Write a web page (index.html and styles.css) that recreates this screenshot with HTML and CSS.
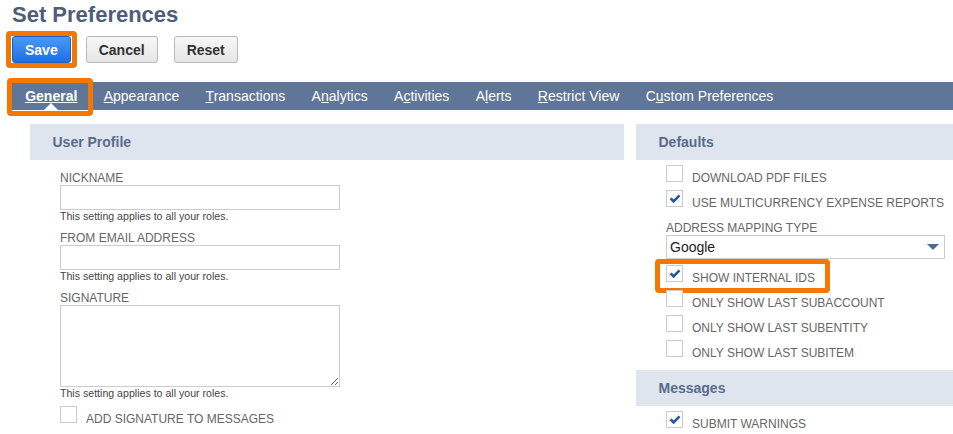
FILE: index.html
```html
<!DOCTYPE html>
<html lang="en">
<head>
    <meta charset="UTF-8">
    <title>Set Preferences</title>
    <link rel="stylesheet" href="styles.css">
</head>
<body>
    <header class="page-head">
        <h1 class="page-title">Set Preferences</h1>
        <div class="actions">
            <button class="btn btn-primary marked">Save</button>
            <button class="btn">Cancel</button>
            <button class="btn">Reset</button>
        </div>
    </header>

    <nav class="tabs">
        <a class="tab active marked"><u>G</u>eneral</a>
        <a class="tab"><u>A</u>ppearance</a>
        <a class="tab"><u>T</u>ransactions</a>
        <a class="tab">A<u>n</u>alytics</a>
        <a class="tab">A<u>c</u>tivities</a>
        <a class="tab">A<u>l</u>erts</a>
        <a class="tab"><u>R</u>estrict View</a>
        <a class="tab">C<u>u</u>stom Preferences</a>
    </nav>

    <main class="panels">
        <section class="panel">
            <h2 class="panel-head">User Profile</h2>
            <div class="panel-body fields">
                <div class="field">
                    <label class="field-label">NICKNAME</label>
                    <input class="text-input" type="text">
                    <div class="help">This setting applies to all your roles.</div>
                </div>
                <div class="field">
                    <label class="field-label">FROM EMAIL ADDRESS</label>
                    <input class="text-input" type="text">
                    <div class="help">This setting applies to all your roles.</div>
                </div>
                <div class="field field-last">
                    <label class="field-label">SIGNATURE</label>
                    <textarea class="text-area"></textarea>
                    <div class="help">This setting applies to all your roles.</div>
                </div>
                <div class="check-row">
                    <span class="box"></span>
                    <span class="check-label">ADD SIGNATURE TO MESSAGES</span>
                </div>
            </div>
        </section>

        <div class="side">
            <section class="panel">
                <h2 class="panel-head">Defaults</h2>
                <div class="panel-body checks">
                    <div class="check-row">
                        <span class="box"></span>
                        <span class="check-label">DOWNLOAD PDF FILES</span>
                    </div>
                    <div class="check-row">
                        <span class="box"><svg viewBox="0 0 15 15"><path d="M2.6 8.2 L4.6 6.4 L6.6 8.6 L11.6 3.4 L13.4 5.2 L6.6 12.2 Z"/></svg></span>
                        <span class="check-label">USE MULTICURRENCY EXPENSE REPORTS</span>
                    </div>
                    <label class="field-label select-label">ADDRESS MAPPING TYPE</label>
                    <div class="select">
                        <span>Google</span>
                        <svg class="caret" viewBox="0 0 12 6"><path d="M0 0 H12 L6 6 Z"/></svg>
                    </div>
                    <div class="check-row marked first-after-select">
                        <span class="box"><svg viewBox="0 0 15 15"><path d="M2.6 8.2 L4.6 6.4 L6.6 8.6 L11.6 3.4 L13.4 5.2 L6.6 12.2 Z"/></svg></span>
                        <span class="check-label">SHOW INTERNAL IDS</span>
                    </div>
                    <div class="check-row">
                        <span class="box"></span>
                        <span class="check-label">ONLY SHOW LAST SUBACCOUNT</span>
                    </div>
                    <div class="check-row">
                        <span class="box"></span>
                        <span class="check-label">ONLY SHOW LAST SUBENTITY</span>
                    </div>
                    <div class="check-row">
                        <span class="box"></span>
                        <span class="check-label">ONLY SHOW LAST SUBITEM</span>
                    </div>
                </div>
            </section>

            <section class="panel panel-messages">
                <h2 class="panel-head">Messages</h2>
                <div class="panel-body checks">
                    <div class="check-row">
                        <span class="box"><svg viewBox="0 0 15 15"><path d="M2.6 8.2 L4.6 6.4 L6.6 8.6 L11.6 3.4 L13.4 5.2 L6.6 12.2 Z"/></svg></span>
                        <span class="check-label">SUBMIT WARNINGS</span>
                    </div>
                </div>
            </section>
        </div>
    </main>
</body>
</html>
```

FILE: styles.css
```css
* {
    margin: 0;
    padding: 0;
    box-sizing: border-box;
}

html {
    overflow: hidden;
}

body {
    background: #fff;
    color: #333;
    font-family: "Liberation Sans", Arial, sans-serif;
    font-size: 12px;
    width: 953px;
}

/* page header */
.page-head {
    padding: 2px 0 0 12px;
}

.page-title {
    font-size: 22px;
    line-height: 26px;
    font-weight: bold;
    color: #4e5d78;
}

.actions {
    display: flex;
    gap: 15px;
    margin-top: 8px;
}

.btn {
    position: relative;
    height: 27px;
    padding: 0 12px;
    border: 1px solid #b8b8b8;
    border-radius: 3px;
    background: linear-gradient(#f7f7f7, #e6e6e6);
    color: #333;
    font-family: inherit;
    font-size: 14px;
    font-weight: bold;
}

.btn-primary {
    background: linear-gradient(#4a9af7, #1d6fe3);
    border-color: #1b5fc4;
    color: #fff;
}

.btn + .btn + .btn {
    margin-left: 1px;
}

/* orange annotation frames */
.marked::after {
    content: "";
    position: absolute;
    box-sizing: border-box;
    border: 5px solid #f57600;
    border-radius: 4px;
    pointer-events: none;
}

.btn.marked::after {
    left: -7px;
    right: -7px;
    top: -6px;
    bottom: -6px;
}

/* tabs */
.tabs {
    display: flex;
    height: 28px;
    margin: 19px 0 0 12px;
    background: #607698;
}

.tab {
    position: relative;
    padding: 0 13.2px;
    line-height: 28px;
    font-size: 14px;
    color: #fff;
    white-space: nowrap;
}

.tab.active {
    font-weight: bold;
    text-decoration: underline;
}

.tab.active::before {
    content: "";
    position: absolute;
    left: 50%;
    bottom: 0;
    margin-left: -7px;
    border-left: 7px solid transparent;
    border-right: 7px solid transparent;
    border-bottom: 7px solid #fff;
}

.tab.marked::after {
    left: -5px;
    top: -4px;
    width: 86px;
    bottom: -6px;
}

/* panels */
.panels {
    display: grid;
    grid-template-columns: 594px 1fr;
    gap: 12px;
    margin-top: 14px;
    padding-left: 30px;
}

.panel-head {
    height: 36px;
    padding-left: 22.5px;
    background: #dfe5ee;
    color: #5a6c8c;
    font-size: 14px;
    line-height: 36px;
}

.panel-body {
    padding-left: 30px;
}

.fields {
    padding-top: 10px;
}

.checks {
    padding-top: 5px;
}

.panel-messages {
    margin-top: 5px;
}

.field {
    margin-bottom: 7px;
}

.field-last {
    margin-bottom: 6px;
}

.field-label {
    display: block;
    padding-top: 1px;
    line-height: 14px;
    font-size: 12px;
    color: #666;
}

.text-input {
    display: block;
    width: 280px;
    height: 25px;
    border: 1px solid #ccc;
    font-family: inherit;
}

.text-area {
    display: block;
    width: 280px;
    height: 82px;
    border: 1px solid #ccc;
    font-family: inherit;
    resize: both;
}

.help {
    font-size: 10.6px;
    line-height: 13px;
    color: #444;
}

/* checkbox rows */
.check-row {
    position: relative;
    display: flex;
    align-items: flex-start;
    height: 25px;
}

.box {
    flex-shrink: 0;
    width: 17px;
    height: 17px;
    border: 1px solid #ccc;
    background: #fff;
}

.box svg {
    display: block;
    width: 15px;
    height: 15px;
    fill: #22569f;
}

.check-label {
    margin-left: 9px;
    padding-top: 5.5px;
    line-height: 15px;
    font-size: 12px;
    color: #666;
    white-space: nowrap;
}

.select-label {
    margin-top: 5px;
}

.select {
    display: flex;
    align-items: center;
    justify-content: space-between;
    width: 279px;
    height: 24px;
    padding: 0 5px 0 3px;
    border: 1px solid #ccc;
    font-size: 14px;
    color: #222;
}

.caret {
    width: 12px;
    height: 6px;
    fill: #4f6a90;
}

.first-after-select {
    margin-top: 6px;
}

.check-row.marked::after {
    left: -11px;
    top: -6px;
    width: 175px;
    height: 34px;
}
```
